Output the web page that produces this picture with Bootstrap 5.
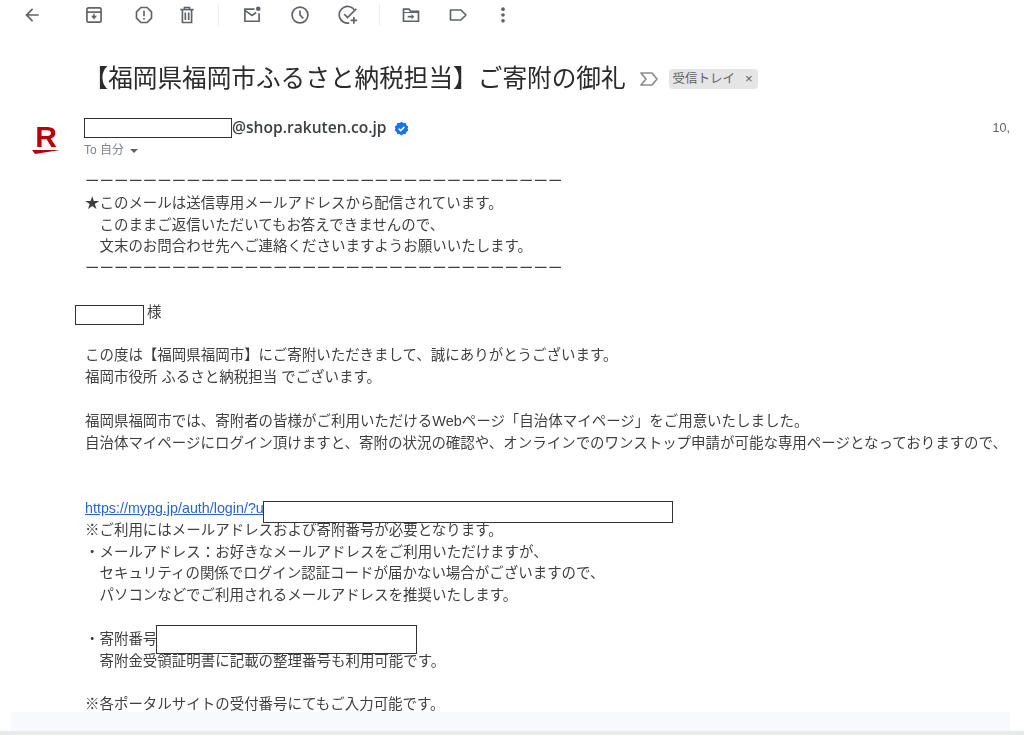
<!DOCTYPE html>
<html lang="ja">
<head>
<meta charset="utf-8">
<title>メール</title>
<link href="https://cdn.jsdelivr.net/npm/bootstrap@5.3.0/dist/css/bootstrap.min.css" rel="stylesheet">
<style>
html,body{height:100%;overflow:hidden;background:#fff}
body{font-family:"Liberation Sans","Noto Sans CJK JP",sans-serif;color:#3c4043}
.page-shell{height:735px;filter:blur(.35px)}
.tool-row{height:30px;padding-left:22px}
.tool-ico{width:20px;height:20px;flex:none;color:#5f6368}
.tool-ico svg{display:block;width:20px;height:20px}
.gap-back{margin-left:42px}.gap-report{margin-left:30px}.gap-trash{margin-left:23px}
.gap-mail{margin-left:23px}.gap-next{margin-left:28px}.gap-folder{margin-left:21px}
.gap-label{margin-left:27px}.gap-dots{margin-left:25px}
.tool-sep{width:1px;height:22px;background:#eceef0;margin-left:21px;flex:none}
.subject-row{padding-left:83.5px;height:36px;margin-top:31px}
.subject-text{font-size:24.65px;line-height:36px;color:#2b2b2b;font-weight:400;margin:0;white-space:nowrap}
.marker-ico{width:20px;height:16px;margin-left:13px;color:#8a8d90}
.inbox-chip{background:#e4e5e4;border-radius:4px;height:20px;line-height:20px;font-size:12.5px;padding:0 5px 0 4px;margin-left:10px;color:#5f6368;white-space:nowrap}
.chip-x{margin-left:10px;font-size:13px}
.head-row{margin-top:20px;height:44px}
.brand-slot{width:84px;flex:none;padding:6px 0 0 31px}
.brand-slot svg{display:block;width:30px;height:32px;overflow:visible}
.head-main{flex:1;min-width:0}
.from-line{height:22px}
.redact{display:inline-block;background:#fff;border:1.5px solid #333}
.redact-from{width:148px;height:20px}
.from-mail{font-family:"Open Sans","Liberation Sans",sans-serif;font-weight:600;font-size:15.6px;color:#3c4043;margin-left:0}
.verified{width:15px;height:15px;margin-left:7px}
.date-tag{font-size:12.5px;color:#5f6368;margin-right:14px;white-space:nowrap}
.to-line{font-size:12px;color:#80868b;line-height:22px}
.caret-mark{display:inline-block;border:4px solid transparent;border-top-color:#5f6368;border-bottom:0;margin-left:6px;vertical-align:middle}
.mail-body{flex:1;min-height:0;overflow:hidden;padding-left:85px;margin-top:10px;font-size:14.48px;line-height:21.8px;color:#3f3f3f;white-space:nowrap}
.ln{height:21.8px}
.redact-name{width:69px;height:20px;margin-left:-10px;margin-right:3px;vertical-align:-8px}
.redact-link{width:410px;height:22px;vertical-align:-8px;margin-left:-1px}
.mail-link{color:#2a66d0;font-size:14.3px;vertical-align:2px}
.redact-num{width:261px;height:29px;vertical-align:-10px;margin-top:-8px;margin-left:-1px}
.foot-band{height:19px;background:#f8f9fd;margin:0 14px 0 10px;flex:none}
.foot-strip{height:4px;background:#e8e9e9;flex:none}
</style>
</head>
<body>
<div class="page-shell d-flex flex-column">
  <div class="tool-row d-flex align-items-center">
    <span class="tool-ico"><svg viewBox="0 0 24 24" fill="currentColor"><path d="M20 11H7.83l5.59-5.59L12 4l-8 8 8 8 1.41-1.41L7.83 13H20v-2z"/></svg></span>
    <span class="tool-ico gap-back"><svg viewBox="0 0 24 24" fill="none" stroke="currentColor" stroke-width="2"><rect x="3.500" y="3.500" width="17" height="17" rx="2"/><path d="M3.500 8.500h17"/><path d="M12 10.500v4" stroke-width="1.800"/><path d="M8.500 13h7L12 17.500z" fill="currentColor" stroke="none"/></svg></span>
    <span class="tool-ico gap-report"><svg viewBox="0 0 24 24" fill="none" stroke="currentColor" stroke-width="2"><path d="M8.300 3h7.400L21 8.300v7.400L15.700 21H8.300L3 15.700V8.300z"/><path d="M12 7v6.500"/><path d="M12 15.500v2"/></svg></span>
    <span class="tool-ico gap-trash"><svg viewBox="0 0 24 24" fill="none" stroke="currentColor" stroke-width="2"><path d="M4 5.500h16"/><path d="M9 5V3h6v2"/><path d="M6.500 6v15h11V6"/><path d="M10 9v9M14 9v9"/></svg></span>
    <span class="tool-sep"></span>
    <span class="tool-ico gap-mail"><svg viewBox="0 0 24 24" fill="none" stroke="currentColor" stroke-width="2"><path d="M15 5H3.500v14.500h17V10"/><path d="M3.500 6.500l8.500 6 5-3.500"/><circle cx="19.500" cy="4.500" r="2.800" fill="currentColor" stroke="none"/></svg></span>
    <span class="tool-ico gap-next"><svg viewBox="0 0 24 24" fill="none" stroke="currentColor" stroke-width="2"><circle cx="12" cy="12" r="9.500"/><path d="M12 6.500V12l4 4"/></svg></span>
    <span class="tool-ico gap-next"><svg viewBox="0 0 24 24" fill="none" stroke="currentColor" stroke-width="2"><path d="M20 6.500A10 10 0 1 0 13.500 21.500"/><path d="M7.500 11l4 4L22 4.500"/><path d="M19 14.500v8M15 18.500h8"/></svg></span>
    <span class="tool-sep"></span>
    <span class="tool-ico gap-folder"><svg viewBox="0 0 24 24" fill="none" stroke="currentColor" stroke-width="2"><path d="M3 19.500V5h6.500l2 2.500h9.500v12z"/><path d="M3 9h18" stroke-width="1.200"/><path d="M8 14h5"/><path d="M12.500 11l3.500 3-3.500 3z" fill="currentColor" stroke="none"/></svg></span>
    <span class="tool-ico gap-label"><svg viewBox="0 0 24 24" fill="none" stroke="currentColor" stroke-width="2"><path d="M3 6h12.500L21.500 12l-6 6H3z" stroke-linejoin="round"/></svg></span>
    <span class="tool-ico gap-dots"><svg viewBox="0 0 24 24" fill="currentColor"><circle cx="12" cy="5" r="2.200"/><circle cx="12" cy="12" r="2.200"/><circle cx="12" cy="19" r="2.200"/></svg></span>
  </div>

  <div class="subject-row d-flex align-items-center">
    <h1 class="subject-text">【福岡県福岡市ふるさと納税担当】ご寄附の御礼</h1>
    <svg class="marker-ico" viewBox="0 0 20 16" fill="none" stroke="currentColor" stroke-width="1.700"><path d="M2 2h11l5 6-5 6H2l5-6z" stroke-linejoin="round"/></svg>
    <span class="inbox-chip">受信トレイ<span class="chip-x">×</span></span>
  </div>

  <div class="head-row d-flex">
    <div class="brand-slot">
      <svg viewBox="0 0 30 32"><text x="15" y="24" text-anchor="middle" font-family="Liberation Sans" font-weight="700" font-size="30" fill="#b8000a">R</text><path d="M1 27h28L4 31z" fill="#b8000a"/></svg>
    </div>
    <div class="head-main">
      <div class="from-line d-flex align-items-center">
        <span class="redact redact-from"></span>
        <span class="from-mail">@shop.rakuten.co.jp</span>
        <svg class="verified" viewBox="0 0 24 24"><path fill="#1a73e8" d="M12 1l3 2.200 3.700-.1 1.100 3.500 3 2.200L21.700 12l1.100 3.200-3 2.200-1.100 3.500-3.700-.1L12 23l-3-2.200-3.700.1-1.100-3.500-3-2.200L2.300 12 1.200 8.800l3-2.200 1.100-3.500 3.700.1z"/><path d="M7.500 12.200l3.200 3.200 6-6" fill="none" stroke="#fff" stroke-width="2.400"/></svg>
        <span class="date-tag ms-auto">10,</span>
      </div>
      <div class="to-line">To 自分<span class="caret-mark"></span></div>
    </div>
  </div>

  <div class="mail-body">
    <div class="ln">ーーーーーーーーーーーーーーーーーーーーーーーーーーーーーーーーー</div>
    <div class="ln">★このメールは送信専用メールアドレスから配信されています。</div>
    <div class="ln">　このままご返信いただいてもお答えできませんので、</div>
    <div class="ln">　文末のお問合わせ先へご連絡くださいますようお願いいたします。</div>
    <div class="ln">ーーーーーーーーーーーーーーーーーーーーーーーーーーーーーーーーー</div>
    <div class="ln"></div>
    <div class="ln"><span class="redact redact-name"></span>様</div>
    <div class="ln"></div>
    <div class="ln">この度は【福岡県福岡市】にご寄附いただきまして、誠にありがとうございます。</div>
    <div class="ln">福岡市役所 ふるさと納税担当 でございます。</div>
    <div class="ln"></div>
    <div class="ln">福岡県福岡市では、寄附者の皆様がご利用いただけるWebページ「自治体マイページ」をご用意いたしました。</div>
    <div class="ln">自治体マイページにログイン頂けますと、寄附の状況の確認や、オンラインでのワンストップ申請が可能な専用ページとなっておりますので、</div>
    <div class="ln"></div>
    <div class="ln"></div>
    <div class="ln"><a class="mail-link" href="#">https://mypg.jp/auth/login/?u</a><span class="redact redact-link"></span></div>
    <div class="ln">※ご利用にはメールアドレスおよび寄附番号が必要となります。</div>
    <div class="ln">・メールアドレス：お好きなメールアドレスをご利用いただけますが、</div>
    <div class="ln">　セキュリティの関係でログイン認証コードが届かない場合がございますので、</div>
    <div class="ln">　パソコンなどでご利用されるメールアドレスを推奨いたします。</div>
    <div class="ln"></div>
    <div class="ln">・寄附番号<span class="redact redact-num"></span></div>
    <div class="ln">　寄附金受領証明書に記載の整理番号も利用可能です。</div>
    <div class="ln"></div>
    <div class="ln">※各ポータルサイトの受付番号にてもご入力可能です。</div>
  </div>

  <div class="foot-band"></div>
  <div class="foot-strip"></div>
</div>
<script src="https://cdn.jsdelivr.net/npm/bootstrap@5.3.0/dist/js/bootstrap.bundle.min.js"></script>
</body>
</html>
